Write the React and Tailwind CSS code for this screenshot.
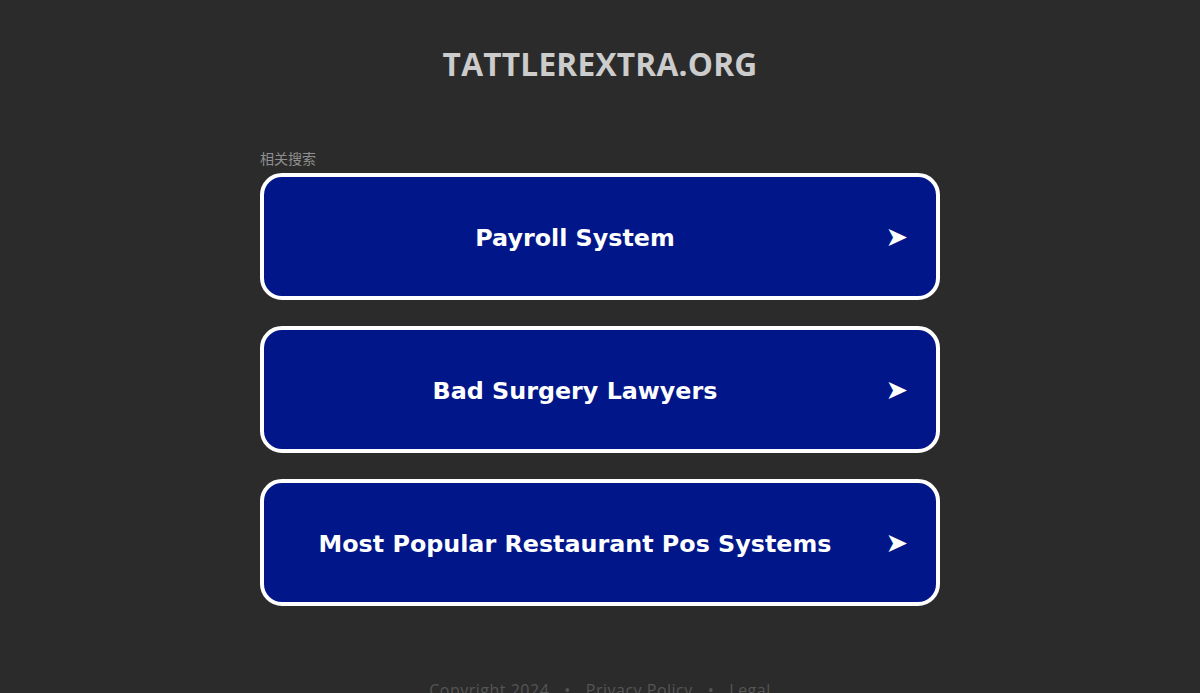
export default function App() {
  const items = ["Payroll System", "Bad Surgery Lawyers", "Most Popular Restaurant Pos Systems"];
  return (
    <div className="min-h-[693px] bg-[#2b2b2b] flex flex-col items-center" style={{ fontFamily: '"Open Sans", sans-serif' }}>
      <h1 className="mt-[44px] text-[31.7px] leading-[40px] font-bold text-[#cccccc] tracking-[0.2px]">TATTLEREXTRA.ORG</h1>
      <div className="mt-[65px] w-[680px]">
        <div className="text-[14px] leading-[18px] text-[#8f8f8f] mb-[6px]" style={{ fontFamily: '"Noto Sans CJK SC", sans-serif' }}>相关搜索</div>
        <div className="flex flex-col gap-[26px]">
          {items.map((t) => (
            <a key={t} href="#" className="h-[127px] rounded-[22px] border-[4px] border-white bg-[#011689] flex items-center pl-[4px] pr-[28px] text-white">
              <span className="flex-1 text-center text-[23.8px] leading-[30px] pt-[2px] font-bold" style={{ fontFamily: '"DejaVu Sans", Verdana, sans-serif' }}>{t}</span>
              <span className="w-[26px] text-[27px] leading-none text-right" style={{ fontFamily: '"DejaVu Sans", sans-serif' }}>➤</span>
            </a>
          ))}
        </div>
      </div>
      <div className="mt-[72px] text-[16px] tracking-[0.5px] text-[#555555] flex gap-[15px]">
        <span>Copyright 2024</span><span>•</span><span>Privacy Policy</span><span>•</span><span>Legal</span>
      </div>
    </div>
  );
}
